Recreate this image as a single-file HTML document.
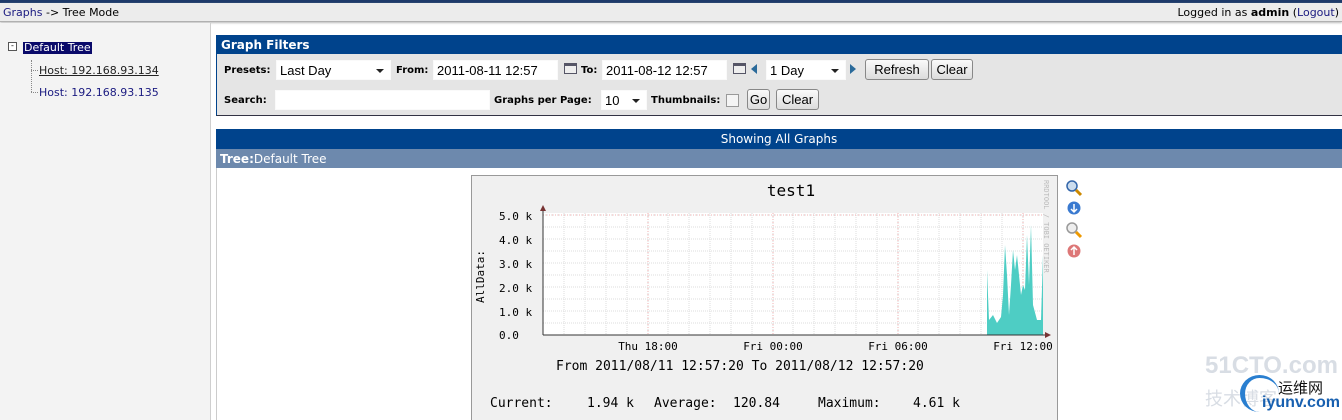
<!DOCTYPE html>
<html><head><meta charset="utf-8"><style>
body{margin:0;width:1342px;height:420px;overflow:hidden;background:#fff;font-family:"DejaVu Sans","Liberation Sans",sans-serif;font-size:11px;position:relative}
.a{position:absolute}
.lbl{font-weight:bold;font-size:10px;color:#000}
.inp{position:absolute;background:#fff;border:1px solid #fafafa;font-family:"Liberation Sans",sans-serif;font-size:13px;line-height:20px;height:20px;padding-left:3px;box-sizing:border-box}
.btn{position:absolute;border:1px solid #888;border-radius:3px;background:linear-gradient(#fafafa,#dcdcdc);font-family:"Liberation Sans",sans-serif;font-size:13px;text-align:center;line-height:19px;height:21px;box-sizing:border-box}
.dd:after{content:"";position:absolute;right:6px;top:8px;border:4px solid transparent;border-top:4px solid #222;}
</style></head><body>
<div class="a" style="left:0;top:0;width:1342px;height:3px;background:#1d3a6a"></div>
<div class="a" style="left:0;top:3px;width:1342px;height:18px;background:#ececec;border-bottom:1px solid #b0b0b0;box-shadow:0 1px 2px #bbb"></div>
<div class="a" style="left:3px;top:6px;color:#1a1a80">Graphs <span style="color:#000">-&gt; Tree Mode</span></div>
<div class="a" style="right:3px;top:6px">Logged in as <b>admin</b> (<span style="color:#1a1a80">Logout</span>)</div>
<div class="a" style="left:0;top:23px;width:210px;height:397px;background:#f3f3f3;border-right:1px solid #cfcfcf"></div>
<div class="a" style="left:8px;top:42px;width:7px;height:7px;border:1px solid #555;background:#fff;font-size:8px;line-height:6px;text-align:center">-</div>
<div class="a" style="left:23px;top:42px;background:#0a0a6a;color:#fff;padding:0 1px;font-size:11px;line-height:12px">Default Tree</div>
<div class="a" style="left:31px;top:60px;height:32px;border-left:1px dotted #888"></div>
<div class="a" style="left:31px;top:70px;width:7px;border-top:1px dotted #888"></div>
<div class="a" style="left:31px;top:92px;width:7px;border-top:1px dotted #888"></div>
<div class="a" style="left:39px;top:64px;font-size:11px;color:#222;text-decoration:underline">Host: 192.168.93.134</div>
<div class="a" style="left:39px;top:86px;font-size:11px;color:#1a1a80">Host: 192.168.93.135</div>

<div class="a" style="left:216px;top:35px;width:1126px;height:19px;background:#00438c"></div>
<div class="a" style="left:221px;top:38px;color:#fff;font-weight:bold;font-size:12px">Graph Filters</div>
<div class="a" style="left:216px;top:54px;width:1126px;height:62px;background:#e5e5e5;border-left:1px solid #00438c;border-bottom:1px solid #334;box-sizing:border-box"></div>
<div class="a lbl" style="left:224px;top:65px">Presets:</div>
<div class="inp dd" style="left:276px;top:60px;width:115px">Last Day</div>
<div class="a lbl" style="left:396px;top:65px">From:</div>
<div class="inp" style="left:433px;top:60px;width:125px">2011-08-11 12:57</div>
<div class="a" style="left:564px;top:63px;width:13px;height:11px;border:1px solid #556;background:#eee;box-sizing:border-box;border-top:3px solid #556"></div>
<div class="a lbl" style="left:581px;top:65px">To:</div>
<div class="inp" style="left:602px;top:60px;width:125px">2011-08-12 12:57</div>
<div class="a" style="left:733px;top:63px;width:13px;height:11px;border:1px solid #556;background:#eee;box-sizing:border-box;border-top:3px solid #556"></div>
<div class="a" style="left:751px;top:64px;border:5px solid transparent;border-right:6px solid #2a6a9a;border-left:0"></div>
<div class="inp dd" style="left:766px;top:60px;width:80px">1 Day</div>
<div class="a" style="left:850px;top:64px;border:5px solid transparent;border-left:6px solid #2a6a9a;border-right:0"></div>
<div class="btn" style="left:865px;top:59px;width:64px">Refresh</div>
<div class="btn" style="left:931px;top:59px;width:42px">Clear</div>
<div class="a lbl" style="left:224px;top:95px">Search:</div>
<div class="inp" style="left:275px;top:90px;width:215px"></div>
<div class="a lbl" style="left:494px;top:95px">Graphs per Page:</div>
<div class="inp dd" style="left:601px;top:90px;width:46px">10</div>
<div class="a lbl" style="left:651px;top:95px">Thumbnails:</div>
<div class="a" style="left:726px;top:94px;width:11px;height:11px;border:1px solid #999;background:#f4f4f4"></div>
<div class="btn" style="left:747px;top:89px;width:23px">Go</div>
<div class="btn" style="left:776px;top:89px;width:43px">Clear</div>

<div class="a" style="left:216px;top:129px;width:1126px;height:20px;background:#00438c;color:#fff;font-size:12px;text-align:center;line-height:21px">Showing All Graphs</div>
<div class="a" style="left:216px;top:149px;width:1126px;height:19px;background:#6d89ad;color:#fff;font-size:12px;line-height:20px;padding-left:4px"><b>Tree:</b>Default Tree</div>
<div class="a" style="left:216px;top:168px;width:1px;height:252px;background:#ccc"></div>

<svg class="a" style="left:471px;top:175px" width="587" height="245" xmlns="http://www.w3.org/2000/svg">
<rect x="0.5" y="0.5" width="586" height="250" fill="#f0f0f0" stroke="#999"/>
<rect x="72" y="38" width="500" height="122" fill="#fff"/>
<g stroke="#ddd" stroke-width="1" stroke-dasharray="1,1">
<path d="M72 148H572M72 136H572M72 124H572M72 112H572M72 100H572M72 88H572M72 76H572M72 64H572M72 52H572M72 40H572"/>
<path d="M93 38V160M114 38V160M135 38V160M156 38V160M177 38V160M197 38V160M218 38V160M239 38V160M260 38V160M281 38V160M302 38V160M322 38V160M343 38V160M364 38V160M385 38V160M406 38V160M427 38V160M447 38V160M468 38V160M489 38V160M510 38V160M531 38V160M552 38V160"/>
</g>
<g stroke="#f0b0b0" stroke-dasharray="1,2"><path d="M72 40H572M177 38V160M302 38V160M427 38V160M552 38V160"/></g>
<path d="M516 160V95L518 145L522 140L526 148L530 142L532 120L534 70L536 100L538 140L540 110L542 75L544 95L546 80L548 100L550 120L552 110L554 115L556 60L558 110L560 50L562 130L566 145L570 145L572 80V160Z" fill="#4ecdc4"/>
<path d="M72 160H576M72 160V34" stroke="#333"/>
<path d="M69 36L72 30L75 36Z M574 157L580 160L574 163Z" fill="#733"/>
<g font-family="DejaVu Sans Mono,Liberation Mono,monospace" font-size="11" fill="#000">
<text x="320" y="21" font-size="16" text-anchor="middle">test1</text>
<text x="28" y="45">5.0 k</text><text x="28" y="69">4.0 k</text><text x="28" y="93">3.0 k</text><text x="28" y="117">2.0 k</text><text x="28" y="141">1.0 k</text><text x="28" y="164">0.0</text>
<text transform="translate(13,128) rotate(-90)">AllData:</text>
<text x="177" y="175" text-anchor="middle">Thu 18:00</text><text x="302" y="175" text-anchor="middle">Fri 00:00</text><text x="427" y="175" text-anchor="middle">Fri 06:00</text><text x="552" y="175" text-anchor="middle">Fri 12:00</text>
<text x="85" y="195" font-size="13">From 2011/08/11 12:57:20 To 2011/08/12 12:57:20</text>
<g font-size="13"><text x="19" y="232">Current:</text><text x="116" y="232">1.94 k</text><text x="183" y="232">Average:</text><text x="262" y="232">120.84</text><text x="347" y="232">Maximum:</text><text x="442" y="232">4.61 k</text></g>
<text transform="translate(573,5) rotate(90)" font-size="7" fill="#bbb">RRDTOOL / TOBI OETIKER</text>
</g>
</svg>
<svg class="a" style="left:1064px;top:178px" width="20" height="82">
<circle cx="8" cy="8" r="5" fill="#cde" stroke="#36a" stroke-width="1.5"/><path d="M12 12L17 17" stroke="#c80" stroke-width="3"/>
<circle cx="10" cy="30" r="6.5" fill="#3a7ad0"/><path d="M10 26V34M7 31L10 34L13 31" stroke="#fff" stroke-width="1.5" fill="none"/>
<circle cx="8" cy="50" r="5" fill="#eee" stroke="#999" stroke-width="1.5"/><path d="M12 54L17 59" stroke="#e90" stroke-width="3"/>
<circle cx="10" cy="73" r="6.5" fill="#d77"/><path d="M10 77V69M7 72L10 69L13 72" stroke="#fff" stroke-width="1.5" fill="none"/>
</svg>
<div class="a" style="left:1205px;top:352px;font-size:24px;font-weight:bold;color:#d8dde4;font-family:'Liberation Sans',sans-serif">51CTO.com</div>
<div class="a" style="left:1205px;top:385px;font-size:18px;color:#d8dde4;font-family:'Noto Sans CJK SC',sans-serif">技术博客</div>
<div class="a" style="left:1278px;top:377px;font-size:15px;color:#111;font-family:'Liberation Sans','Noto Sans CJK SC',sans-serif">运维网</div>
<div class="a" style="left:1262px;top:394px;font-size:16px;font-weight:bold;color:#1860b0;font-family:'Liberation Sans',sans-serif">iyunv.com</div>
<div class="a" style="left:1240px;top:375px;width:34px;height:34px;border-radius:50%;border-left:5px solid #2a7fd0;border-top:3px solid #2a7fd0;border-right:0;border-bottom:0"></div>
</body></html>
